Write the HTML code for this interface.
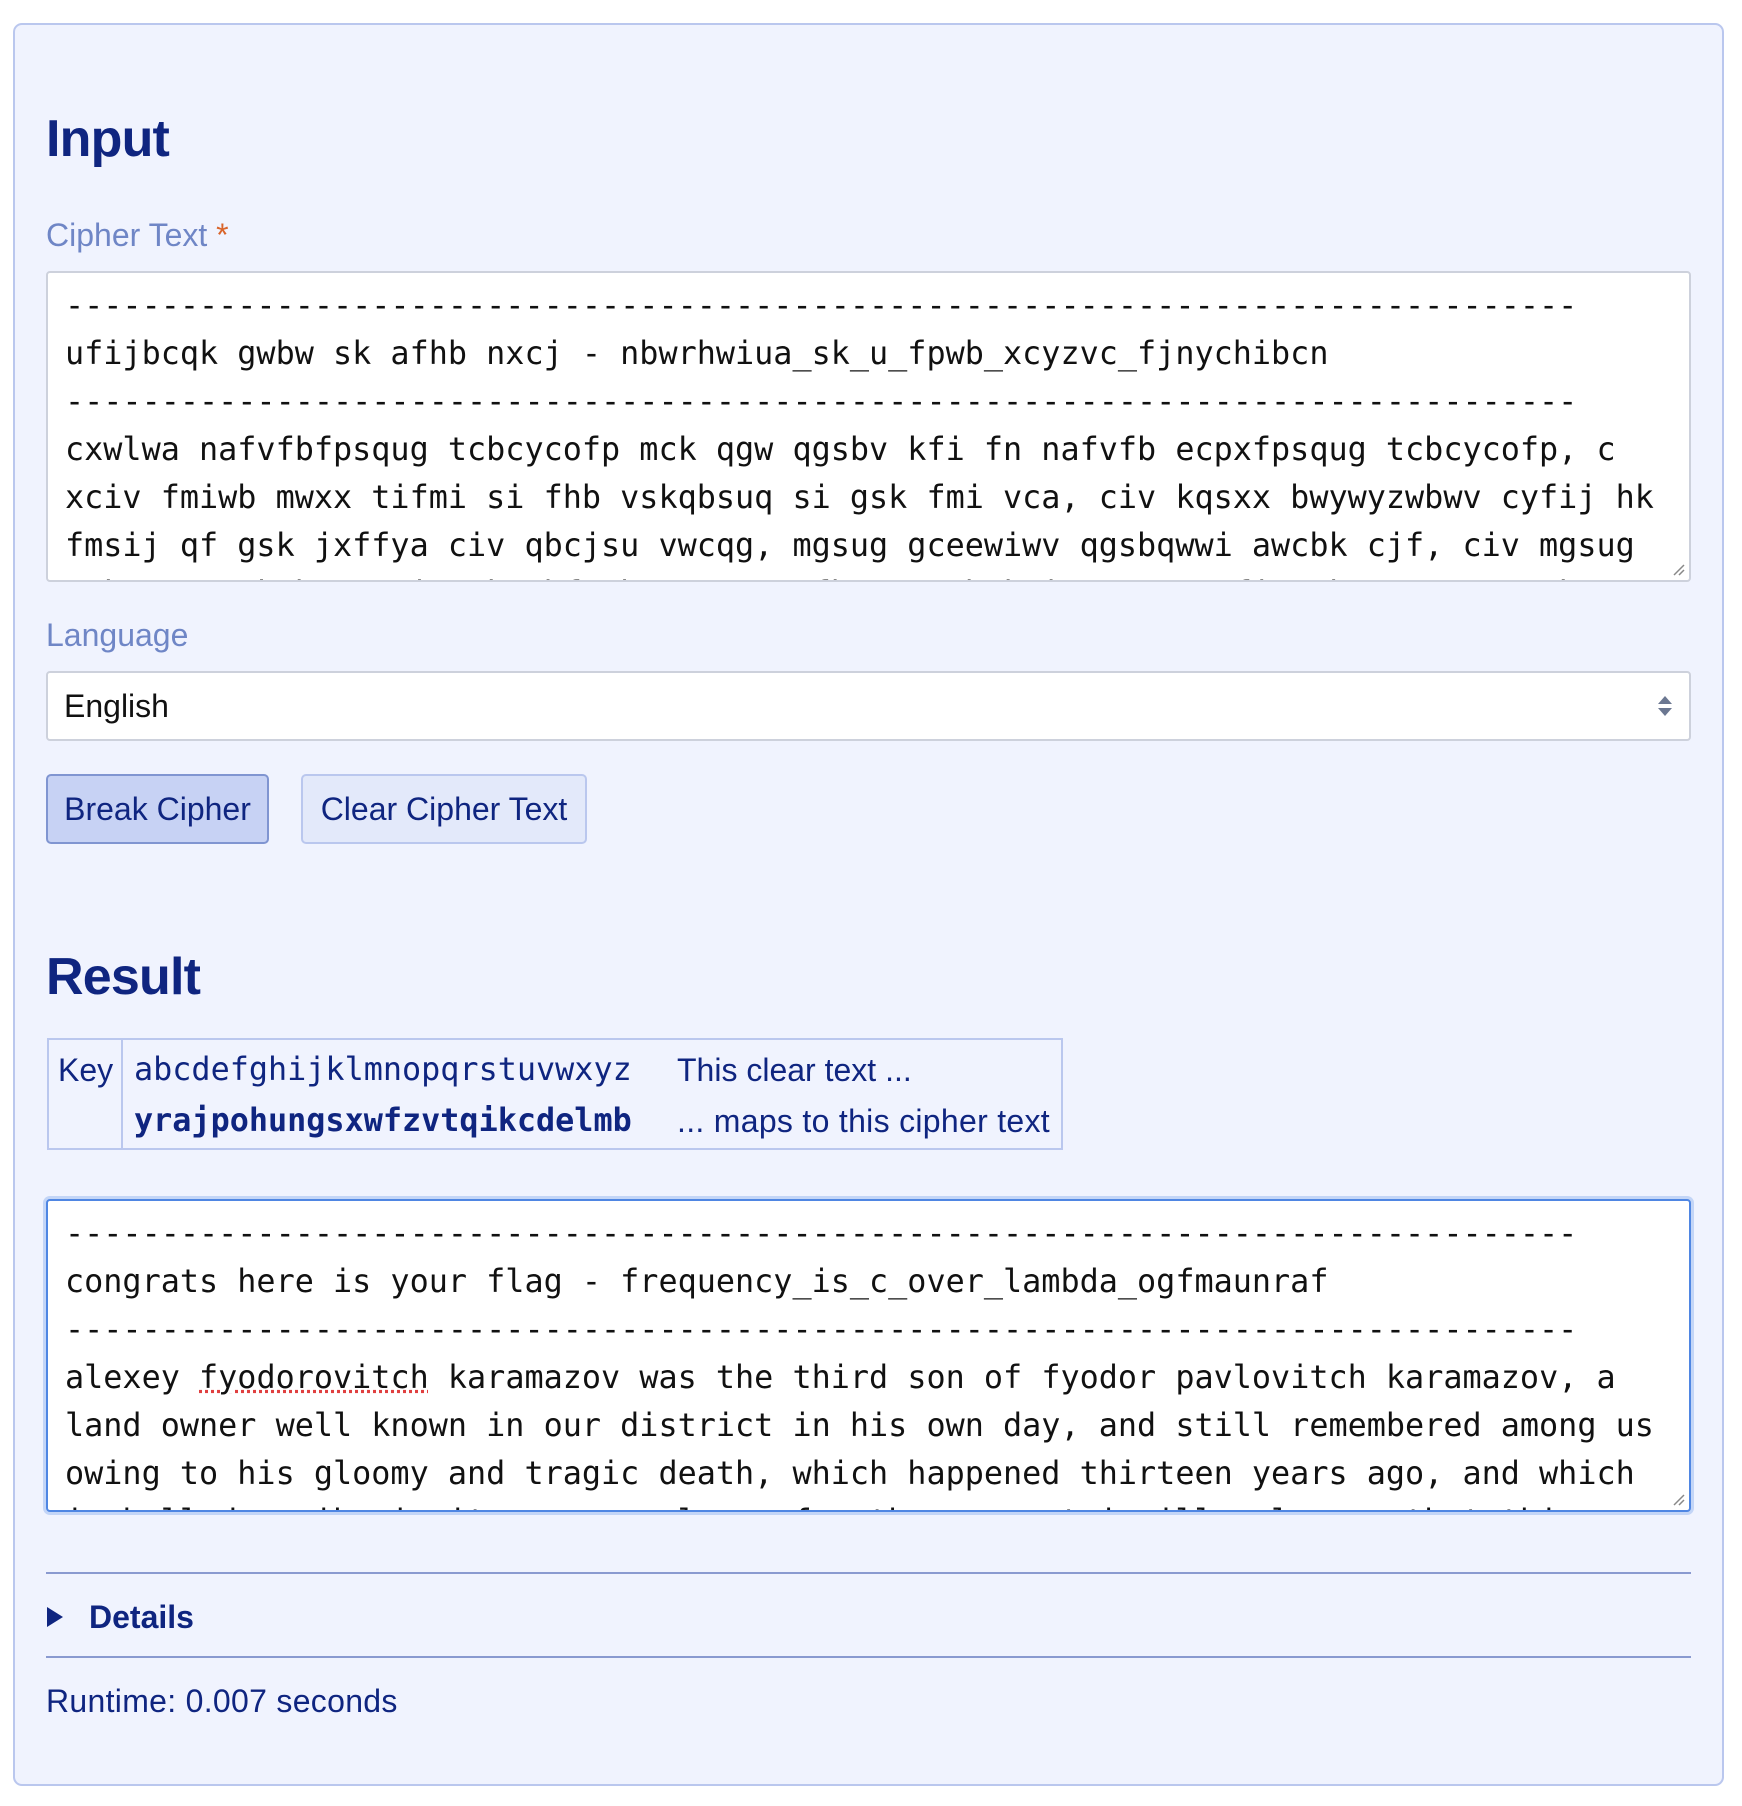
<!DOCTYPE html>
<html><head><meta charset="utf-8"><style>
*{box-sizing:border-box;margin:0;padding:0}
body{width:1742px;height:1806px;background:#fff;font-family:"Liberation Sans",sans-serif;color:#0f2580;position:relative;overflow:hidden}
.panel{position:absolute;left:13px;top:23px;width:1711px;height:1763px;background:#f0f3fe;border:2px solid #bac7ee;border-radius:9px}
.a{position:absolute;white-space:pre}
h2{position:absolute;font-size:52px;font-weight:bold;line-height:1;color:#0f2580;letter-spacing:-0.8px}
.lbl{font-size:32px;line-height:48px;color:#6f86c6}
.mono{font-family:"DejaVu Sans Mono","Liberation Mono",monospace}
.ta{position:absolute;left:46px;width:1645px;background:#fff;border:2px solid #cdd1dc;border-radius:4px;overflow:hidden;padding:9px 0 0 17px;font-family:"DejaVu Sans Mono","Liberation Mono",monospace;font-size:31.8px;line-height:48px;color:#111;white-space:pre}
.d{display:inline-block;transform:scaleX(1.6);transform-origin:0 50%}
.grip{position:absolute;right:4px;bottom:4px;width:14px;height:14px}
.btn{position:absolute;top:774px;height:70px;border-radius:5px;font-size:32px;line-height:66px;text-align:center;color:#0f2580}
</style></head><body>
<div class="panel"></div>
<h2 style="left:46px;top:113px">Input</h2>
<div class="a lbl" style="left:46px;top:211px">Cipher Text <span style="color:#d9642a">*</span></div>
<div class="ta" style="top:271px;height:311px">-------------------------------------------------------------------------------
ufijbcqk gwbw sk afhb nxcj - nbwrhwiua_sk_u_fpwb_xcyzvc_fjnychibcn
-------------------------------------------------------------------------------
cxwlwa nafvfbfpsqug tcbcycofp mck qgw qgsbv kfi fn nafvfb ecpxfpsqug tcbcycofp, c
xciv fmiwb mwxx tifmi si fhb vskqbsuq si gsk fmi vca, civ kqsxx bwywyzwbwv cyfij hk
fmsij qf gsk jxffya civ qbcjsu vwcqg, mgsug gceewiwv qgsbqwwi awcbk cjf, civ mgsug
s kgcxx vwkubsrw si sqk ebfewb exuuw. nfb qgw ebwkwiq s msxx fixa kca qgcq qgsk
<svg class="grip" viewBox="0 0 14 14"><path d="M3 13L13 3M8 13L13 8" stroke="#888" stroke-width="1.5"/></svg></div>
<div class="a lbl" style="left:46px;top:611px">Language</div>
<div style="position:absolute;left:46px;top:671px;width:1645px;height:70px;background:#fff;border:2px solid #cdd1dc;border-radius:4px"></div>
<div class="a" style="left:64px;top:682px;font-size:32px;line-height:48px;color:#111">English</div>
<svg style="position:absolute;left:1657px;top:695px" width="16" height="22" viewBox="0 0 16 22"><path d="M8 1L15 9H1Z M8 21L15 13H1Z" fill="#6b7791"/></svg>
<div class="btn" style="left:46px;width:223px;background:#c7d2f4;border:2px solid #8095d1">Break Cipher</div>
<div class="btn" style="left:301px;width:286px;background:#e3e9fa;border:2px solid #bac7ee">Clear Cipher Text</div>
<h2 style="left:46px;top:951px">Result</h2>
<div style="position:absolute;left:47px;top:1038px;width:1016px;height:112px;border:2px solid #bac7ee"></div>
<div style="position:absolute;left:121px;top:1038px;width:2px;height:112px;background:#bac7ee"></div>
<div class="a" style="left:58px;top:1046px;font-size:32px;line-height:48px">Key</div>
<div class="a mono" style="left:134px;top:1046px;font-size:31.8px;line-height:48px">abcdefghijklmnopqrstuvwxyz</div>
<div class="a mono" style="left:134px;top:1097px;font-size:31.8px;line-height:48px;font-weight:bold">yrajpohungsxwfzvtqikcdelmb</div>
<div class="a" style="left:677px;top:1046px;font-size:32px;line-height:48px">This clear text ...</div>
<div class="a" style="left:677px;top:1097px;font-size:32px;line-height:48px;letter-spacing:0.3px">... maps to this cipher text</div>
<div class="ta" style="top:1199px;height:313px;border:2px solid #4f86e3;box-shadow:0 0 0 3px #c3d5f7">-------------------------------------------------------------------------------
congrats here is your flag - frequency_is_c_over_lambda_ogfmaunraf
-------------------------------------------------------------------------------
alexey <span style="text-decoration:underline dotted #e04040">fyodorovitch</span> karamazov was the third son of fyodor pavlovitch karamazov, a
land owner well known in our district in his own day, and still remembered among us
owing to his gloomy and tragic death, which happened thirteen years ago, and which
i shall describe in its proper place. for the present i will only say that this
<svg class="grip" viewBox="0 0 14 14"><path d="M3 13L13 3M8 13L13 8" stroke="#888" stroke-width="1.5"/></svg></div>
<div style="position:absolute;left:46px;top:1572px;width:1645px;height:2px;background:#8a9ad0"></div>
<svg style="position:absolute;left:46px;top:1606px" width="18" height="22" viewBox="0 0 18 22"><path d="M1 1L17 11L1 21Z" fill="#0f2580"/></svg>
<div class="a" style="left:89px;top:1593px;font-size:32px;line-height:48px;font-weight:bold">Details</div>
<div style="position:absolute;left:46px;top:1656px;width:1645px;height:2px;background:#8a9ad0"></div>
<div class="a" style="left:46px;top:1677px;font-size:32px;line-height:48px;letter-spacing:0.3px">Runtime: 0.007 seconds</div>
</body></html>
